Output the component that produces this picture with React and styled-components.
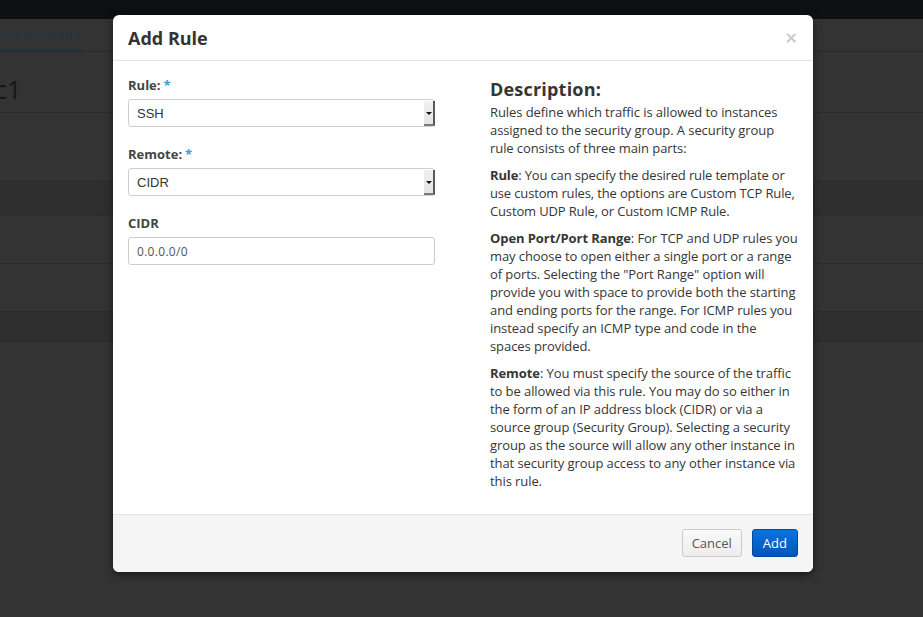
import React from "react";
import styled, { createGlobalStyle } from "styled-components";

const Global = createGlobalStyle`
  html, body { margin: 0; padding: 0; background: #333; }
  body { font-family: "Open Sans", "Noto Sans", sans-serif; width: 923px; height: 617px; overflow: hidden; }
  * { box-sizing: border-box; }
`;

const Page = styled.div`
  position: relative;
  width: 923px;
  height: 617px;
  background: #333333;
  overflow: hidden;
`;

const NavBar = styled.div`
  height: 19px;
  background: #0e0f10;
`;

const TabBar = styled.div`
  height: 33px;
  display: flex;
  align-items: stretch;
  border-bottom: 1px solid #2a2a2a;
`;

const Tab = styled.div`
  display: flex;
  align-items: center;
  white-space: nowrap;
  margin-left: -5px;
  padding: 2px 0 0 4px;
  width: 87px;
  font-size: 13px;
  color: #1d3a4a;
  border-bottom: 2px solid #1b3546;
`;

const TitleArea = styled.div`
  height: 61px;
  display: flex;
  align-items: center;
  border-bottom: 1px solid #2b2b2b;
  font-size: 25px;
  color: #161616;
  padding-top: 14px;
  text-indent: -5px;
`;

const Row = styled.div`
  height: ${(p) => p.$h}px;
  background: ${(p) => (p.$dark ? "#2f2f2f" : "#333333")};
  border-bottom: 1px solid #2b2b2b;
`;

const Modal = styled.div`
  position: absolute;
  left: 113px;
  top: 15px;
  width: 700px;
  background: #fff;
  border-radius: 6px;
  box-shadow: 0 3px 9px rgba(0, 0, 0, 0.5);
  overflow: hidden;
  color: #333;
`;

const Header = styled.div`
  height: 46px;
  display: flex;
  align-items: center;
  justify-content: space-between;
  padding: 0 15px;
  border-bottom: 1px solid #e5e5e5;
`;

const Title = styled.h4`
  margin: 0;
  font-size: 18px;
  font-weight: 700;
  color: #333;
  padding-top: 1px;
`;

const Close = styled.span`
  font-family: "DejaVu Sans", sans-serif;
  font-size: 16px;
  font-weight: 700;
  color: #c9c9c9;
  padding-bottom: 1px;
`;

const Body = styled.div`
  display: grid;
  grid-template-columns: 307px 308px;
  column-gap: 55px;
  padding: 15px;
`;

const FormCol = styled.div`
  display: flex;
  flex-direction: column;
  gap: 18px;
`;

const Group = styled.div`
  display: flex;
  flex-direction: column;
  gap: 5px;
`;

const Label = styled.label`
  font-size: 13px;
  font-weight: 700;
  line-height: 18px;
  color: #444;
`;

const Req = styled.span`
  color: #3a9ad9;
  margin-left: 3px;
`;

const SelectBox = styled.div`
  height: 28px;
  display: flex;
  align-items: stretch;
  justify-content: space-between;
  border: 1px solid #cfcfcf;
  border-radius: 3px;
  background: #fff;
  padding: 1px 0 1px 8px;
`;

const SelectValue = styled.span`
  font-family: "Liberation Sans", Arial, sans-serif;
  font-size: 13px;
  color: #333;
  display: flex;
  align-items: center;
`;

const ArrowButton = styled.span`
  width: 11px;
  background: linear-gradient(#f0f0f0, #e4e4e4);
  border-right: 2px solid #5a5a5a;
  border-bottom: 2px solid #7a7a7a;
  display: flex;
  align-items: center;
  justify-content: center;
  margin-right: -1px;
  margin-bottom: -1px;
  &::after {
    content: "";
    border-left: 3px solid transparent;
    border-right: 3px solid transparent;
    border-top: 3px solid #111;
    margin-top: 1px;
  }
`;

const Input = styled.div`
  height: 28px;
  border: 1px solid #cccccc;
  border-radius: 3px;
  display: flex;
  align-items: center;
  padding-left: 8px;
  font-size: 12px;
  color: #555;
  letter-spacing: 0.3px;
`;

const DescCol = styled.div`
  color: #363636;
  font-size: 13px;
  line-height: 18px;
`;

const DescTitle = styled.h3`
  margin: 0;
  font-size: 18px;
  font-weight: 700;
  line-height: 27px;
  letter-spacing: 0.2px;
`;

const Para = styled.p`
  margin: 0 0 9px 0;
  letter-spacing: ${(p) => (p.$tight ? "-0.15px" : "-0.08px")};
`;

const Footer = styled.div`
  height: 58px;
  background: #f5f5f5;
  border-top: 1px solid #e5e5e5;
  display: flex;
  justify-content: flex-end;
  align-items: flex-start;
  gap: 10px;
  padding: 14px 15px 0 0;
`;

const Button = styled.button`
  height: 28px;
  padding: 0 ${(p) => (p.$primary ? 10 : 9)}px;
  font-family: "Open Sans", sans-serif;
  font-size: 13px;
  border-radius: 3px;
  cursor: pointer;
  color: ${(p) => (p.$primary ? "#fff" : "#555")};
  border: 1px solid ${(p) => (p.$primary ? "#00489e" : "#cccccc")};
  background: ${(p) =>
    p.$primary
      ? "linear-gradient(#0a73dc, #0056bd)"
      : "linear-gradient(#fafafa, #ededed)"};
`;

export default function App() {
  return (
    <Page>
      <Global />
      <NavBar />
      <TabBar>
        <Tab>ess &amp; Security</Tab>
      </TabBar>
      <TitleArea>c1</TitleArea>
      <Row $h={69} />
      <Row $h={34} $dark />
      <Row $h={48} />
      <Row $h={48} />
      <Row $h={30} $dark />
      <Modal>
        <Header>
          <Title>Add Rule</Title>
          <Close>×</Close>
        </Header>
        <Body>
          <FormCol>
            <Group>
              <Label>
                Rule:<Req>*</Req>
              </Label>
              <SelectBox>
                <SelectValue>SSH</SelectValue>
                <ArrowButton />
              </SelectBox>
            </Group>
            <Group>
              <Label>
                Remote:<Req>*</Req>
              </Label>
              <SelectBox>
                <SelectValue>CIDR</SelectValue>
                <ArrowButton />
              </SelectBox>
            </Group>
            <Group>
              <Label>CIDR</Label>
              <Input>0.0.0.0/0</Input>
            </Group>
          </FormCol>
          <DescCol>
            <DescTitle>Description:</DescTitle>
            <Para>
              Rules define which traffic is allowed to instances assigned to the
              security group. A security group rule consists of three main parts:
            </Para>
            <Para $tight>
              <strong>Rule</strong>: You can specify the desired rule template or
              use custom rules, the options are Custom TCP Rule, Custom UDP Rule,
              or Custom ICMP Rule.
            </Para>
            <Para>
              <strong>Open Port/Port Range</strong>: For TCP and UDP rules you may
              choose to open either a single port or a range of ports. Selecting
              the "Port Range" option will provide you with space to provide both
              the starting and ending ports for the range. For ICMP rules you
              instead specify an ICMP type and code in the spaces provided.
            </Para>
            <Para>
              <strong>Remote</strong>: You must specify the source of the traffic
              to be allowed via this rule. You may do so either in the form of an
              IP address block (CIDR) or via a source group (Security Group).
              Selecting a security group as the source will allow any other
              instance in that security group access to any other instance via
              this rule.
            </Para>
          </DescCol>
        </Body>
        <Footer>
          <Button>Cancel</Button>
          <Button $primary>Add</Button>
        </Footer>
      </Modal>
    </Page>
  );
}
